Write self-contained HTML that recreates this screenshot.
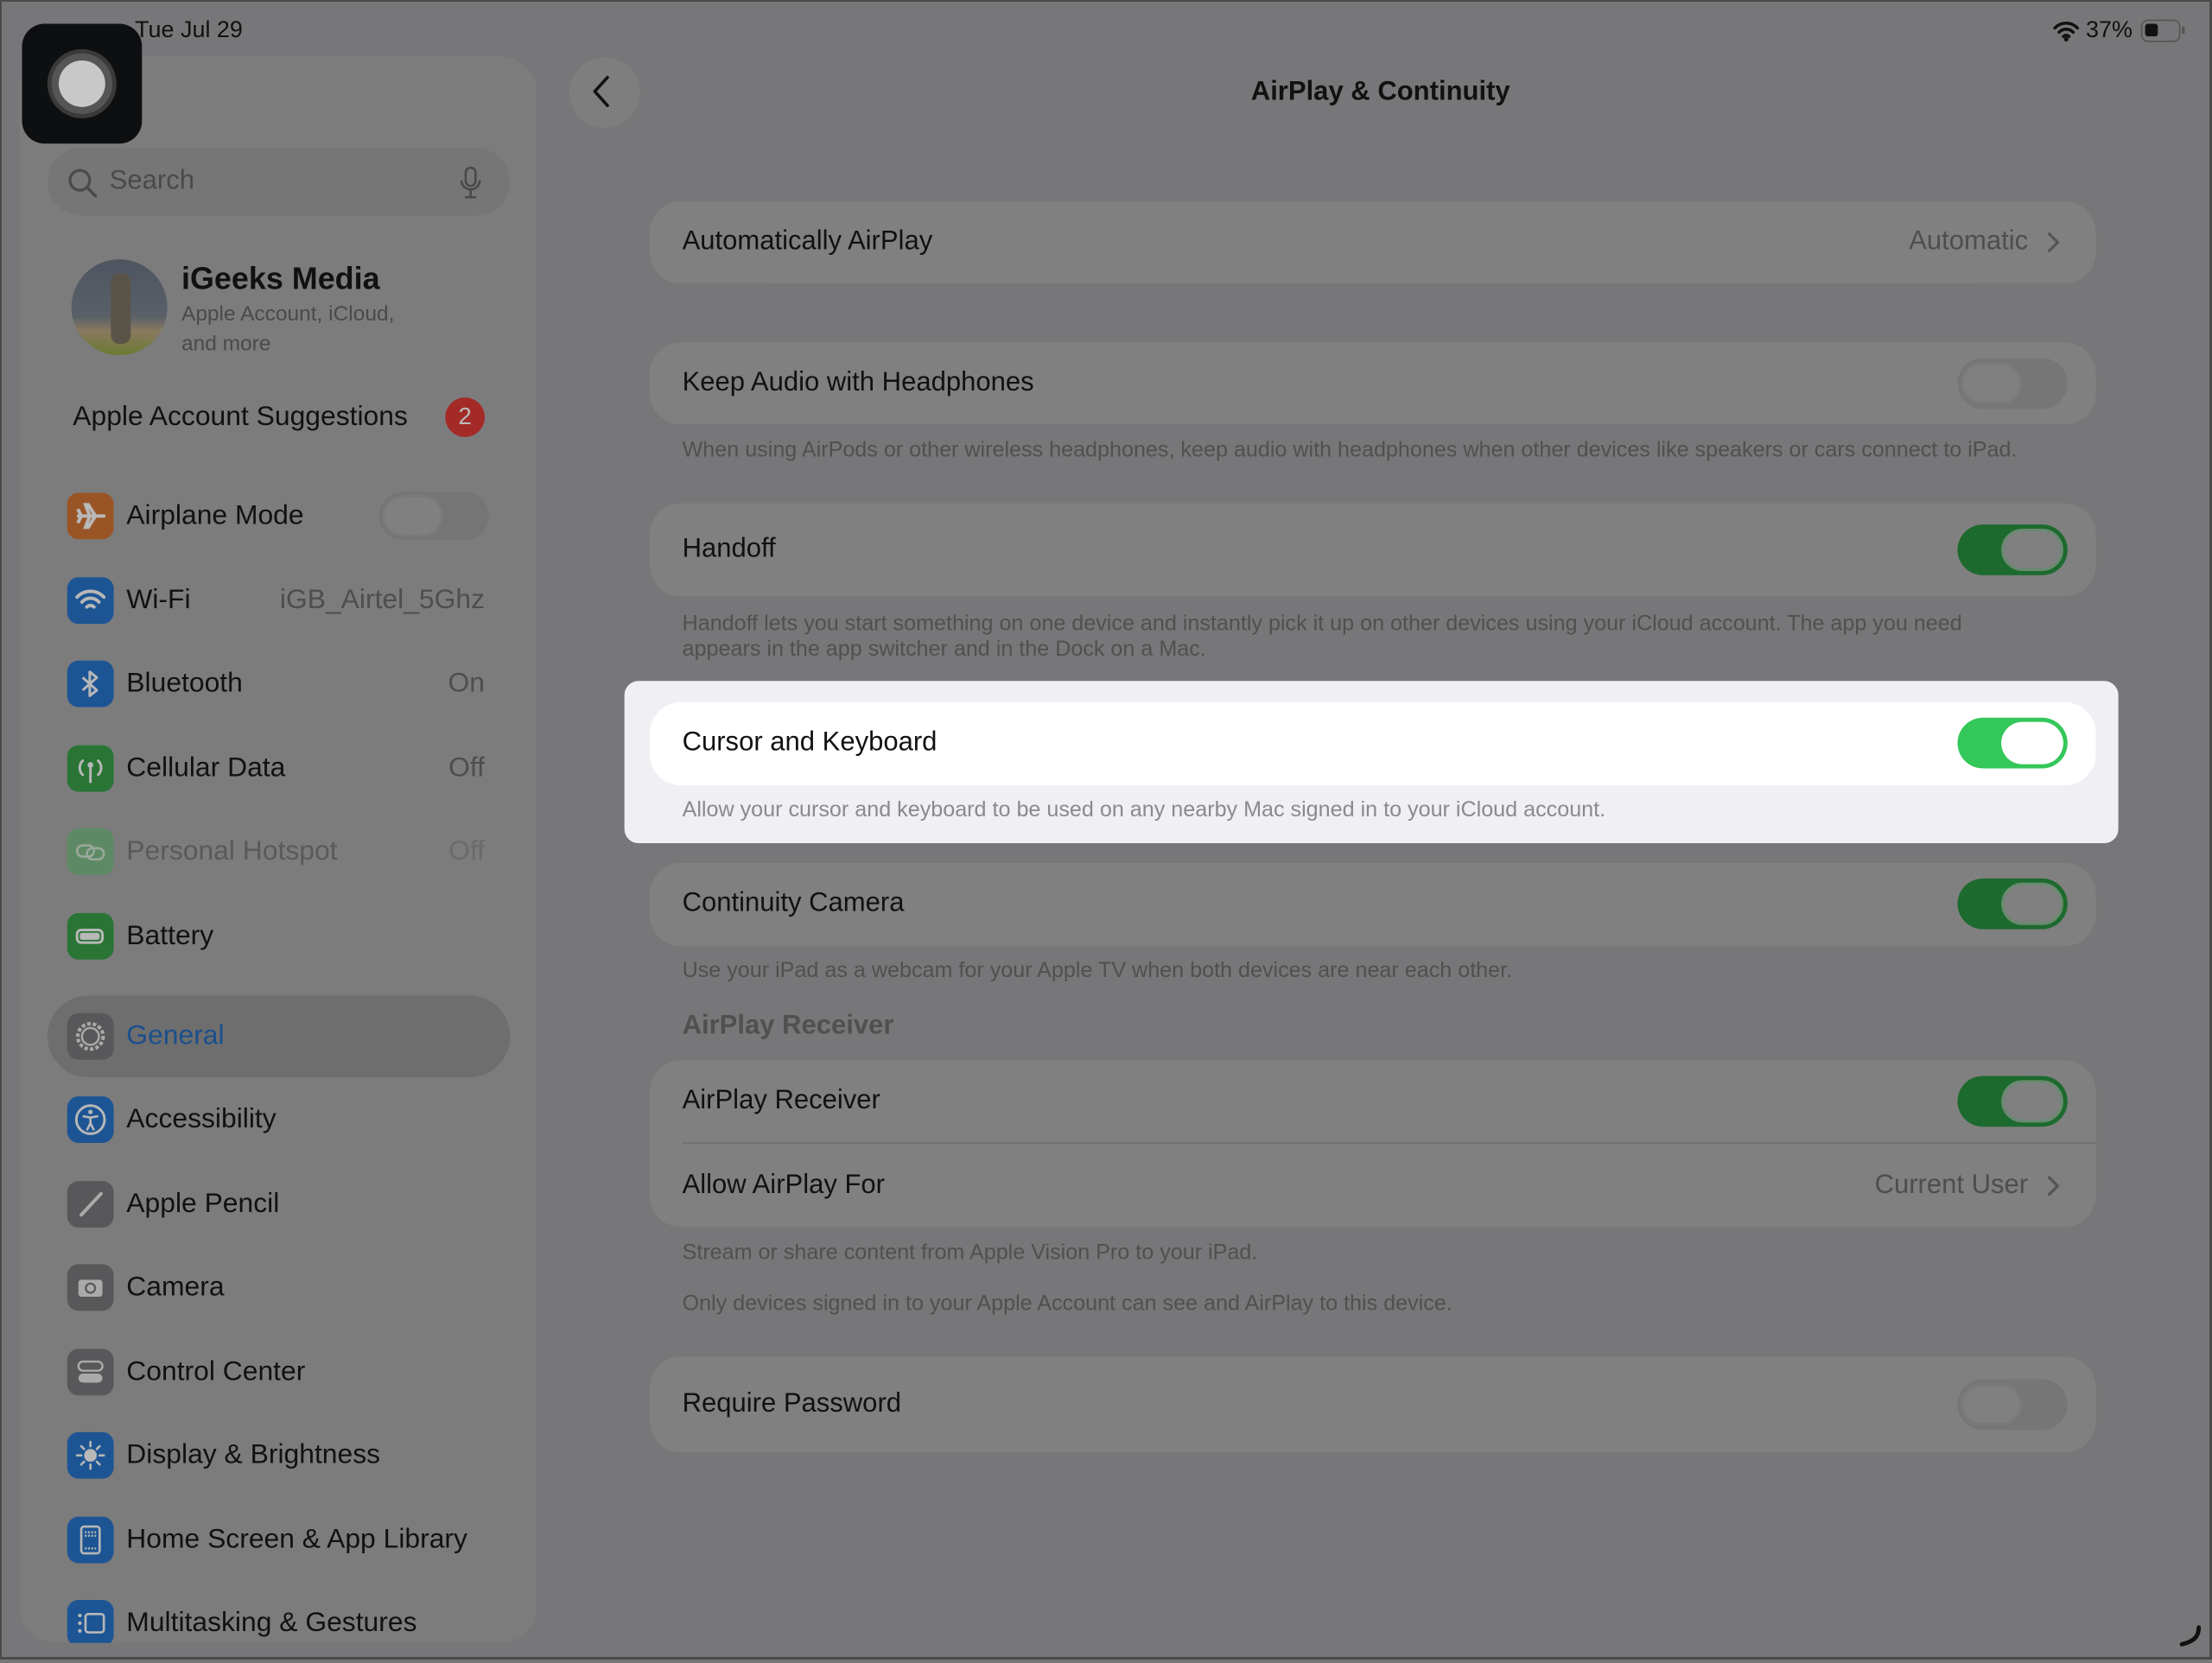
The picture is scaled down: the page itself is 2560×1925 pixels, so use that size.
<!DOCTYPE html>
<html><head><meta charset="utf-8"><style>
*{box-sizing:border-box;margin:0;padding:0}
html,body{width:2560px;height:1921px;overflow:hidden;background:#777779}
.s{position:absolute;left:1px;top:3px;width:1568px;height:1177px;transform:scale(1.632653);transform-origin:0 0;background:#777779;font-family:"Liberation Sans",sans-serif;color:#111}
.a{position:absolute}
.t{position:absolute;white-space:nowrap;transform:translateY(-50%)}
.side{left:13px;top:38px;width:367px;height:1125px;background:#7c7c7d;border-radius:26px}
.ic{position:absolute;left:47px;width:33px;height:33px;border-radius:8px;transform:translateY(-50%)}
.ic svg{position:absolute;left:0;top:0}
.lbl{left:89px;font-size:19.5px}
.val{right:1225px;font-size:19.5px;color:#4e4e4e}
.card{position:absolute;left:460px;width:1025px;background:#808080;border-radius:22px}
.rl{left:483px;font-size:19px}
.ft{left:483px;font-size:15.4px;color:#505050}
.tg{position:absolute;left:1387px;width:78px;height:36px;border-radius:18px;transform:translateY(-50%)}
.tg i{position:absolute;top:3px;width:44px;height:30px;border-radius:15px}
.on{background:#1d6a2e}.on i{right:3px;background:#808080;border:2px solid #6a8a70}
.off{background:#767676}.off i{left:2px;background:#808080;border:2px solid #7a7a7a}
.fr{position:fixed;left:0;top:0;width:2560px;height:1921px;border:3px solid #4a4a4a;border-top-width:2px;border-left-width:2px;z-index:9}
</style></head><body><div class="s">
<div class="t" style="left:95px;top:20px;font-size:16.5px">Tue Jul 29</div>
<svg class="a" style="left:1454px;top:12px" width="20" height="16" viewBox="0 0 20 16"><path d="M2 6a11 11 0 0 1 16 0M5 9a7 7 0 0 1 10 0M8 12a3 3 0 0 1 4 0" stroke="#111" stroke-width="2.2" fill="none" stroke-linecap="round"/><circle cx="10" cy="14" r="1.6" fill="#111"/></svg>
<div class="t" style="left:1478px;top:20px;font-size:16.5px">37%</div>
<div class="a" style="left:1517px;top:12px;width:28px;height:16px;border:1.5px solid #555;border-radius:5px"><div style="position:absolute;left:2px;top:2px;width:9px;height:9px;background:#111;border-radius:2px"></div></div>
<div class="a" style="left:1546px;top:17px;width:2px;height:5px;background:#555"></div>

<div class="a side"></div>
<div class="a" style="left:15px;top:15px;width:85px;height:85px;background:#0e0f10;border-radius:16px"><div style="position:absolute;left:18px;top:18px;width:49px;height:49px;border-radius:50%;background:#555;border:3px solid #3a3a3a"><div style="position:absolute;left:5px;top:5px;width:33px;height:33px;border-radius:50%;background:#c8c8c8"></div></div></div>
<div class="a" style="left:33px;top:103px;width:328px;height:48px;background:#767677;border-radius:24px"></div>
<svg class="a" style="left:47px;top:117px" width="22" height="22" viewBox="0 0 22 22"><circle cx="9" cy="9" r="7" stroke="#4a4a4a" stroke-width="2" fill="none"/><path d="M14 14l6 6" stroke="#4a4a4a" stroke-width="2.2" stroke-linecap="round"/></svg>
<div class="t" style="left:77px;top:127px;font-size:19px;color:#4a4a4a">Search</div>
<svg class="a" style="left:325px;top:116px" width="16" height="24" viewBox="0 0 16 24"><rect x="4.5" y="1" width="7" height="13" rx="3.5" stroke="#4a4a4a" stroke-width="1.6" fill="none"/><path d="M1.5 10a6.5 6.5 0 0 0 13 0M8 17v5M4 22h8" stroke="#4a4a4a" stroke-width="1.6" fill="none"/></svg>
<div class="a" style="left:50px;top:182px;width:68px;height:68px;border-radius:50%;background:linear-gradient(180deg,#4d5560 0%,#5a6068 60%,#8a7a60 75%,#6a7a30 100%)"><div style="position:absolute;left:28px;top:10px;width:14px;height:50px;background:#5a5448;border-radius:6px"></div></div>
<div class="t" style="left:128px;top:196px;font-size:22px;font-weight:bold">iGeeks Media</div>
<div class="t" style="left:128px;top:221px;font-size:15px;color:#4a4a4a">Apple Account, iCloud,</div>
<div class="t" style="left:128px;top:242px;font-size:15px;color:#4a4a4a">and more</div>
<div class="t" style="left:51px;top:294px;font-size:19.5px">Apple Account Suggestions</div>
<div class="a" style="left:315px;top:280px;width:28px;height:28px;border-radius:50%;background:#a42a28;color:#bbb;font-size:17px;text-align:center;line-height:28px">2</div>

<div class="ic" style="top:364px;background:#9a5526"><svg width="33" height="33" viewBox="0 0 33 33"><path d="M8 16.5h18M20 16.5l-5-8h-2l3 8M20 16.5l-5 8h-2l3-8M10 16.5l-2-4M10 16.5l-2 4" stroke="#b8b8b8" stroke-width="2.4" fill="none" stroke-linecap="round"/></svg></div><div class="t lbl" style="top:364px">Airplane Mode</div>
<div class="a" style="left:268px;top:347px;width:78px;height:34px;border-radius:17px;background:#757575"><div style="position:absolute;left:2px;top:2px;width:44px;height:30px;border-radius:15px;background:#808080;border:2px solid #7a7a7a"></div></div>
<div class="ic" style="top:424px;background:#1d5594"><svg width="33" height="33" viewBox="0 0 33 33"><path d="M7 14a13 13 0 0 1 19 0M10.5 17.5a8 8 0 0 1 12 0M14 21a3.5 3.5 0 0 1 5 0" stroke="#b8b8b8" stroke-width="2.4" fill="none" stroke-linecap="round"/></svg></div><div class="t lbl" style="top:424px">Wi-Fi</div><div class="t" style="right:1225px;top:424px;font-size:19.5px;color:#4e4e4e">iGB_Airtel_5Ghz</div>
<div class="ic" style="top:483px;background:#1d5594"><svg width="33" height="33" viewBox="0 0 33 33"><path d="M11 12l10 9-5 4V8l5 4-10 9" stroke="#b8b8b8" stroke-width="1.8" fill="none" stroke-linejoin="round"/></svg></div><div class="t lbl" style="top:483px">Bluetooth</div><div class="t val" style="top:483px">On</div>
<div class="ic" style="top:543px;background:#2a7536"><svg width="33" height="33" viewBox="0 0 33 33"><path d="M16.5 14v12M11 11a7 7 0 0 0 0 10M22 11a7 7 0 0 1 0 10" stroke="#b8b8b8" stroke-width="1.8" fill="none" stroke-linecap="round"/><circle cx="16.5" cy="14" r="2" fill="#b8b8b8"/></svg></div><div class="t lbl" style="top:543px">Cellular Data</div><div class="t val" style="top:543px">Off</div>
<div class="ic" style="top:602px;background:#5d8a64"><svg width="33" height="33" viewBox="0 0 33 33"><rect x="7" y="12" width="12" height="8" rx="4" stroke="#9aa89c" stroke-width="1.6" fill="none"/><rect x="14" y="14" width="12" height="8" rx="4" stroke="#9aa89c" stroke-width="1.6" fill="none"/></svg></div><div class="t lbl" style="top:602px;color:#5a5a5a">Personal Hotspot</div><div class="t val" style="top:602px;color:#6a6a6a">Off</div>
<div class="ic" style="top:662px;background:#2a7536"><svg width="33" height="33" viewBox="0 0 33 33"><rect x="7" y="12" width="18" height="9" rx="3" stroke="#b8b8b8" stroke-width="1.8" fill="none"/><rect x="9" y="14" width="14" height="5" rx="1.5" fill="#b8b8b8"/></svg></div><div class="t lbl" style="top:662px">Battery</div>
<div class="a" style="left:33px;top:704px;width:328px;height:58px;border-radius:29px;background:#6e6e6f"></div>
<div class="ic" style="top:733px;background:#58585a"><svg width="33" height="33" viewBox="0 0 33 33"><circle cx="16.5" cy="16.5" r="9" stroke="#aaa" stroke-width="2.5" fill="none" stroke-dasharray="2.5 1.5"/><circle cx="16.5" cy="16.5" r="6" stroke="#aaa" stroke-width="1.5" fill="none"/></svg></div><div class="t lbl" style="top:733px;color:#1b4f8c">General</div>
<div class="ic" style="top:792px;background:#1d5594"><svg width="33" height="33" viewBox="0 0 33 33"><circle cx="16.5" cy="16.5" r="10" stroke="#b8b8b8" stroke-width="1.8" fill="none"/><circle cx="16.5" cy="11" r="1.6" fill="#b8b8b8"/><path d="M11 14l5.5 1 5.5-1M16.5 15v4l-2.5 5M16.5 19l2.5 5" stroke="#b8b8b8" stroke-width="1.6" fill="none"/></svg></div><div class="t lbl" style="top:792px">Accessibility</div>
<div class="ic" style="top:852px;background:#58585a"><svg width="33" height="33" viewBox="0 0 33 33"><path d="M10 24L24 9" stroke="#aaa" stroke-width="2.4" stroke-linecap="round"/></svg></div><div class="t lbl" style="top:852px">Apple Pencil</div>
<div class="ic" style="top:911px;background:#58585a"><svg width="33" height="33" viewBox="0 0 33 33"><rect x="8" y="11" width="17" height="12" rx="2" fill="#aaa"/><circle cx="16.5" cy="17" r="3.3" stroke="#58585a" stroke-width="1.4" fill="none"/></svg></div><div class="t lbl" style="top:911px">Camera</div>
<div class="ic" style="top:971px;background:#58585a"><svg width="33" height="33" viewBox="0 0 33 33"><rect x="8" y="9" width="17" height="6.5" rx="3.2" stroke="#aaa" stroke-width="1.5" fill="none"/><rect x="8" y="17.5" width="17" height="6.5" rx="3.2" fill="#aaa"/></svg></div><div class="t lbl" style="top:971px">Control Center</div>
<div class="ic" style="top:1030px;background:#1d5594"><svg width="33" height="33" viewBox="0 0 33 33"><circle cx="16.5" cy="16.5" r="4.5" fill="#b8b8b8"/><path d="M16.5 7v3M16.5 23v3M7 16.5h3M23 16.5h3M10 10l2 2M21 21l2 2M10 23l2-2M21 12l2-2" stroke="#b8b8b8" stroke-width="1.6" stroke-linecap="round"/></svg></div><div class="t lbl" style="top:1030px">Display &amp; Brightness</div>
<div class="ic" style="top:1090px;background:#1d5594"><svg width="33" height="33" viewBox="0 0 33 33"><rect x="10" y="7" width="13" height="19" rx="2" stroke="#b8b8b8" stroke-width="1.6" fill="none"/><path d="M12.5 11h8M12.5 13.5h8M12.5 22.5h8" stroke="#b8b8b8" stroke-width="1.4" stroke-dasharray="1.3 1"/></svg></div><div class="t lbl" style="top:1090px">Home Screen &amp; App Library</div>
<div class="ic" style="top:1149px;background:#1d5594"><svg width="33" height="33" viewBox="0 0 33 33"><rect x="13" y="10" width="13" height="13" rx="2" stroke="#b8b8b8" stroke-width="1.6" fill="none"/><circle cx="9" cy="11" r="1.3" fill="#b8b8b8"/><circle cx="9" cy="16.5" r="1.3" fill="#b8b8b8"/><circle cx="9" cy="22" r="1.3" fill="#b8b8b8"/></svg></div><div class="t lbl" style="top:1149px">Multitasking &amp; Gestures</div>
<div class="a" style="left:0;top:1163px;width:1568px;height:14px;background:#777779"></div>

<div class="a" style="left:403px;top:39px;width:50px;height:50px;border-radius:50%;background:#7e7e7e"></div>
<svg class="a" style="left:418px;top:51px" width="16" height="26" viewBox="0 0 16 26"><path d="M12 2L3 12l9 10" stroke="#111" stroke-width="2.2" fill="none" stroke-linecap="round" stroke-linejoin="round"/></svg>
<div class="t" style="left:978px;top:64px;font-size:19px;font-weight:bold;transform:translate(-50%,-50%)">AirPlay &amp; Continuity</div>

<div class="card" style="top:141px;height:58px"></div>
<div class="t rl" style="top:170px">Automatically AirPlay</div>
<div class="t" style="right:131px;top:170px;font-size:19px;color:#4e4e4e">Automatic</div>
<svg class="a" style="left:1450px;top:162px" width="10" height="16" viewBox="0 0 10 16"><path d="M2 2l6 6-6 6" stroke="#555" stroke-width="2" fill="none" stroke-linecap="round"/></svg>

<div class="card" style="top:241px;height:58px"></div>
<div class="t rl" style="top:270px">Keep Audio with Headphones</div>
<div class="tg off" style="top:270px"><i></i></div>
<div class="t ft" style="top:318px">When using AirPods or other wireless headphones, keep audio with headphones when other devices like speakers or cars connect to iPad.</div>

<div class="card" style="top:355px;height:66px"></div>
<div class="t rl" style="top:388px">Handoff</div>
<div class="tg on" style="top:388px"><i></i></div>
<div class="t ft" style="top:441px">Handoff lets you start something on one device and instantly pick it up on other devices using your iCloud account. The app you need</div>
<div class="t ft" style="top:459px">appears in the app switcher and in the Dock on a Mac.</div>

<div class="a" style="left:442px;top:481px;width:1059px;height:115px;background:#f0f0f4;border-radius:10px"></div>
<div class="card" style="top:496px;height:59px;background:#fff"></div>
<div class="t rl" style="top:525px">Cursor and Keyboard</div>
<div class="tg" style="top:525px;background:#34c759"><i style="right:3px;background:#fff"></i></div>
<div class="t ft" style="top:573px;color:#8a8a8e">Allow your cursor and keyboard to be used on any nearby Mac signed in to your iCloud account.</div>

<div class="card" style="top:610px;height:59px"></div>
<div class="t rl" style="top:639px">Continuity Camera</div>
<div class="tg on" style="top:639px"><i></i></div>
<div class="t ft" style="top:687px">Use your iPad as a webcam for your Apple TV when both devices are near each other.</div>
<div class="t" style="left:483px;top:726px;font-size:19px;font-weight:bold;color:#505050">AirPlay Receiver</div>

<div class="card" style="top:750px;height:118px"></div>
<div class="t rl" style="top:779px">AirPlay Receiver</div>
<div class="tg on" style="top:779px"><i></i></div>
<div class="a" style="left:483px;top:808px;width:1002px;height:1px;background:#6e6e6e"></div>
<div class="t rl" style="top:839px">Allow AirPlay For</div>
<div class="t" style="right:131px;top:839px;font-size:19px;color:#4e4e4e">Current User</div>
<svg class="a" style="left:1450px;top:831px" width="10" height="16" viewBox="0 0 10 16"><path d="M2 2l6 6-6 6" stroke="#555" stroke-width="2" fill="none" stroke-linecap="round"/></svg>
<div class="t ft" style="top:887px">Stream or share content from Apple Vision Pro to your iPad.</div>
<div class="t ft" style="top:923px">Only devices signed in to your Apple Account can see and AirPlay to this device.</div>

<div class="card" style="top:960px;height:68px"></div>
<div class="t rl" style="top:994px">Require Password</div>
<div class="tg off" style="top:994px"><i></i></div>
<svg class="a" style="left:1540px;top:1148px" width="22" height="22" viewBox="0 0 22 22"><path d="M18 4c0 7-4 10-12 12" stroke="#111" stroke-width="3" fill="none" stroke-linecap="round"/></svg>
</div>
<div class="fr"></div>
</body></html>
